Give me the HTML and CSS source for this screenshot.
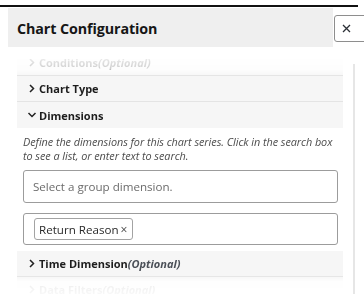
FILE: index.html
```html
<!DOCTYPE html>
<html>
<head>
<meta charset="utf-8">
<link rel="stylesheet" href="styles.css">
</head>
<body>
<div class="topline"></div>
<div class="dialog">
  <div class="header">
    <div class="title-bar"><h1 class="title">Chart Configuration</h1></div>
    <button class="close" aria-label="Close">
      <svg width="9" height="9" viewBox="0 0 9 9"><path d="M1 1L8 8M8 1L1 8" stroke="#2b2f36" stroke-width="1.3" fill="none"/></svg>
    </button>
  </div>
  <div class="body-row">
    <div class="scroll">
      <div class="content">
        <div class="section">
          <svg class="chev" width="6" height="9" viewBox="0 0 6 9"><path d="M1 1L4.5 4.5L1 8" stroke="currentColor" stroke-width="1.5" fill="none"/></svg>
          <span class="label">Conditions<i>(Optional)</i></span>
        </div>
        <div class="section">
          <svg class="chev" width="6" height="9" viewBox="0 0 6 9"><path d="M1 1L4.5 4.5L1 8" stroke="currentColor" stroke-width="1.5" fill="none"/></svg>
          <span class="label">Chart Type</span>
        </div>
        <div class="section open">
          <svg class="chev down" width="9" height="6" viewBox="0 0 9 6"><path d="M1 1L4.5 4.5L8 1" stroke="currentColor" stroke-width="1.5" fill="none"/></svg>
          <span class="label">Dimensions</span>
        </div>
        <div class="section-body">
          <p class="desc">Define the dimensions for this chart series. Click in the search box to see a list, or enter text to search.</p>
          <div class="field"><span class="placeholder">Select a group dimension.</span></div>
          <div class="field multi">
            <span class="chip">Return Reason <span class="chip-x">×</span></span>
          </div>
        </div>
        <div class="section">
          <svg class="chev" width="6" height="9" viewBox="0 0 6 9"><path d="M1 1L4.5 4.5L1 8" stroke="currentColor" stroke-width="1.5" fill="none"/></svg>
          <span class="label">Time Dimension<i class="opt">(Optional)</i></span>
        </div>
        <div class="section">
          <svg class="chev" width="6" height="9" viewBox="0 0 6 9"><path d="M1 1L4.5 4.5L1 8" stroke="currentColor" stroke-width="1.5" fill="none"/></svg>
          <span class="label">Data Filters<i>(Optional)</i></span>
        </div>
      </div>
    </div>
    <div class="track"></div>
  </div>
</div>
</body>
</html>
```

FILE: styles.css
```css
html, body {
  margin: 0;
  padding: 0;
  background: #fff;
  width: 364px;
  height: 294px;
  overflow: hidden;
  font-family: "Open Sans", "Noto Sans", sans-serif;
  color: #1d1d1d;
}
.topline {
  margin-top: 5px;
  height: 2px;
  background: #111;
  width: 358px;
}
.dialog {
  margin-left: 8px;
  display: flex;
  flex-direction: column;
}
.header {
  display: flex;
  height: 39px;
  margin-top: 1px;
}
.title-bar {
  flex: none;
  width: 325px;
  background: #efefef;
  display: flex;
  align-items: center;
  padding-left: 9px;
  box-sizing: border-box;
}
.title {
  margin: 0;
  font-size: 14.3px;
  font-weight: 700;
  color: #161616;
  letter-spacing: -0.1px;
  position: relative;
  top: 1px;
}
.close {
  flex: none;
  margin-top: 7px;
  margin-left: 1px;
  width: 36px;
  height: 27px;
  border: 1px solid #8e8e8e;
  border-radius: 3px;
  background: #fff;
  padding: 0 0 0 7px;
  display: flex;
  align-items: center;
  box-sizing: border-box;
}
.body-row {
  display: flex;
  margin-top: 12px;
  height: 235px;
}
.scroll {
  margin-left: 9px;
  width: 326px;
  overflow: hidden;
  -webkit-mask-image: linear-gradient(to bottom, rgba(0,0,0,0.1) 0, rgba(0,0,0,0.22) 10px, #000 17px, #000 217px, rgba(0,0,0,0.08) 223px, rgba(0,0,0,0.03) 235px);
  mask-image: linear-gradient(to bottom, rgba(0,0,0,0.1) 0, rgba(0,0,0,0.22) 10px, #000 17px, #000 217px, rgba(0,0,0,0.08) 223px, rgba(0,0,0,0.03) 235px);
}
.content {
  margin-top: -9px;
}
.section {
  height: 25px;
  background: #f6f6f6;
  border-bottom: 1px solid #e4e4e4;
  display: flex;
  align-items: center;
  padding-left: 8px;
  font-size: 11px;
  font-weight: 700;
  color: #1d1d1d;
}
.section.open {
  border-bottom: none;
  height: 26px;
}
.section .chev {
  width: 14px;
  flex: none;
  color: #222;
}
.label i {
  font-style: italic;
}
.label .opt {
  color: #4a4f57;
}
.section-body {
  padding: 7px 5px 6px 6px;
  background: #fff;
}
.desc {
  margin: 0;
  width: 312px;
  font-size: 10.85px;
  line-height: 14px;
  font-style: italic;
  color: #4c4c4c;
  letter-spacing: -0.05px;
}
.field {
  margin-top: 7px;
  height: 33px;
  border: 1px solid #9c9c9c;
  border-radius: 3px;
  box-sizing: border-box;
  display: flex;
  align-items: center;
  padding-left: 9px;
  font-size: 11.6px;
}
.placeholder {
  color: #6b6b6b;
}
.field.multi {
  margin-top: 10px;
  height: 32px;
}
.chip {
  height: 22px;
  box-sizing: border-box;
  border: 1px solid #a3a3a3;
  border-radius: 3px;
  display: inline-flex;
  align-items: center;
  padding: 0 5px 0 4px;
  color: #2a2a2a;
  font-size: 11.6px;
  margin-left: 1px;
}
.chip-x {
  margin-left: 2px;
  font-size: 12px;
  color: #444;
}
.track {
  margin-left: 10px;
  margin-top: 5px;
  width: 2px;
  background: #e6e6e6;
}
```
